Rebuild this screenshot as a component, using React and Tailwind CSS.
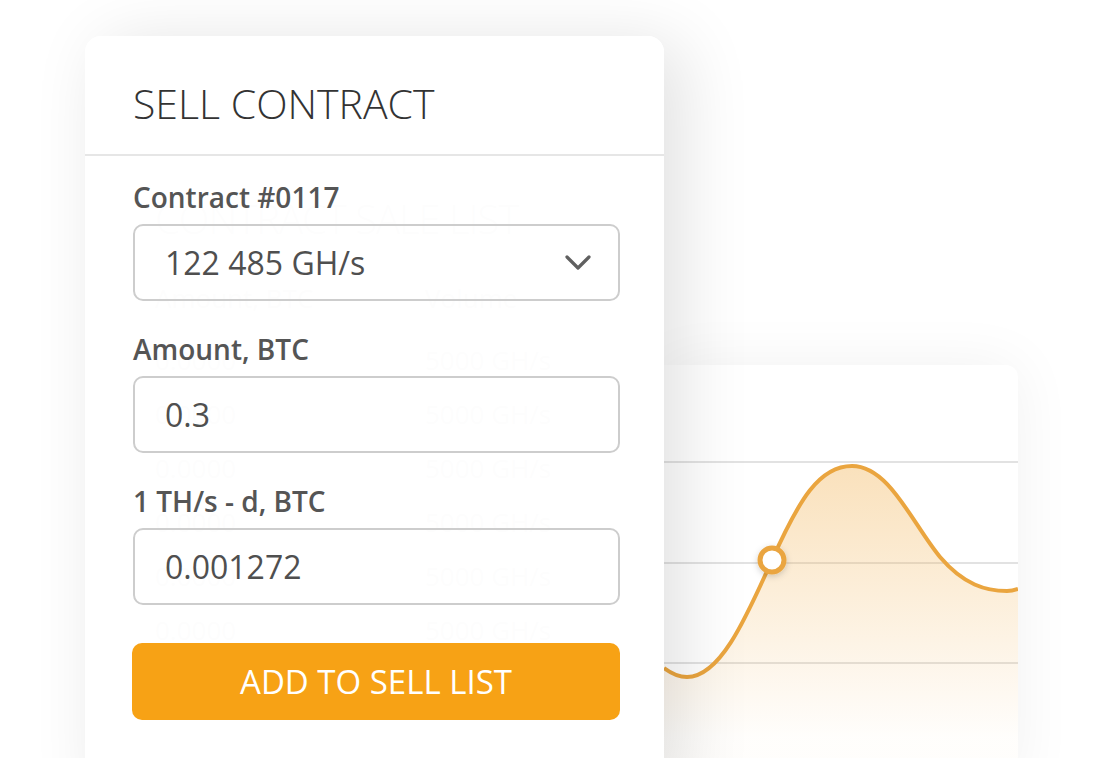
import React from 'react';

// Faint list card that sits behind the sell form
const ghostRows = [0, 1, 2, 3, 4, 5];

const GhostList = () => (
  <div className="absolute left-[155px] top-[199px] w-[480px] text-[#bdbdbd]">
    <h2 className="text-[40px] font-light leading-none tracking-tight">CONTRACT SALE LIST</h2>
    <div className="mt-[46px] flex text-[26px] leading-none">
      <span className="w-[270px]">Amount, BTC</span>
      <span>Volume</span>
    </div>
    <div className="mt-[36px] flex flex-col gap-[28px] text-[26px] leading-none">
      {ghostRows.map((i) => (
        <div key={i} className="flex">
          <span className="w-[270px]">0.0000</span>
          <span>5000 GH/s</span>
        </div>
      ))}
    </div>
  </div>
);

const ChartCard = () => (
  <div className="absolute left-[664px] top-[365px] w-[354px] h-[420px] bg-white rounded-tr-xl shadow-[0_0_60px_rgba(0,0,0,0.06)] overflow-hidden">
    <svg width="354" height="420" viewBox="0 0 354 420" className="block">
      <defs>
        <linearGradient id="fillGrad" x1="0" y1="0" x2="0" y2="1">
          <stop offset="0" stopColor="#F2B457" stopOpacity="0.4" />
          <stop offset="0.85" stopColor="#F2B457" stopOpacity="0.02" />
        </linearGradient>
        <filter id="dotShadow" x="-50%" y="-50%" width="200%" height="200%">
          <feDropShadow dx="0" dy="2" stdDeviation="3" floodColor="#000" floodOpacity="0.18" />
        </filter>
      </defs>
      <line x1="0" y1="97" x2="354" y2="97" stroke="#e2e2e2" strokeWidth="2" />
      <line x1="0" y1="198" x2="354" y2="198" stroke="#e2e2e2" strokeWidth="2" />
      <line x1="0" y1="298" x2="354" y2="298" stroke="#e2e2e2" strokeWidth="2" />
      <path
        d="M0 303 C 8 309, 14 312, 23 312 C 55 312, 80 258, 108 195 C 135 135, 155 101, 188 101 C 225 101, 248 158, 276 192 C 300 220, 322 226, 343 226 C 347 226, 351 225, 354 224 L 354 420 L 0 420 Z"
        fill="url(#fillGrad)"
      />
      <path
        d="M0 303 C 8 309, 14 312, 23 312 C 55 312, 80 258, 108 195 C 135 135, 155 101, 188 101 C 225 101, 248 158, 276 192 C 300 220, 322 226, 343 226 C 347 226, 351 225, 354 224"
        fill="none"
        stroke="#EAA53F"
        strokeWidth="4"
      />
      <circle cx="108" cy="195" r="12" fill="#fff" stroke="#EAA53F" strokeWidth="5" filter="url(#dotShadow)" />
    </svg>
  </div>
);

const Field = ({ label, value, select, first }) => (
  <div className={first ? '' : 'mt-[34px]'}>
    <label className="block text-[28px] font-semibold leading-none text-[#555]">{label}</label>
    <div className="mt-[13px] h-[77px] w-[487px] flex items-center justify-between rounded-[10px] border-2 border-[#cdcdcd] pl-[30px] pr-[27px]">
      <span className="text-[32px] leading-none text-[#4f4f4f]">{value}</span>
      {select && (
        <svg width="26" height="16" viewBox="0 0 26 16" fill="none">
          <path d="M2 2 L13 13 L24 2" stroke="#606060" strokeWidth="3.2" strokeLinecap="round" strokeLinejoin="round" />
        </svg>
      )}
    </div>
  </div>
);

const SellCard = () => (
  <div className="absolute left-[85px] top-[36px] w-[579px] h-[760px] rounded-t-2xl bg-white/[0.96] shadow-[18px_8px_70px_rgba(0,0,0,0.12)]">
    <div className="h-[120px] border-b-2 border-[#e6e6e6] px-12 pt-[47px]">
      <h1 className="text-[41px] font-light leading-none text-[#333]">SELL CONTRACT</h1>
    </div>
    <div className="px-12 pt-[27px]">
      <Field first label="Contract #0117" value="122 485 GH/s" select />
      <Field label="Amount, BTC" value="0.3" />
      <Field label="1 TH/s - d, BTC" value="0.001272" />
      <button className="mt-[38px] h-[77px] w-[488px] -ml-px rounded-[10px] bg-[#F7A215] text-[33px] font-medium leading-none text-white">
        ADD TO SELL LIST
      </button>
    </div>
  </div>
);

export default function App() {
  return (
    <div className="relative w-[1102px] h-[758px] overflow-hidden bg-white font-['Open_Sans',sans-serif]">
      <ChartCard />
      <GhostList />
      <SellCard />
    </div>
  );
}
